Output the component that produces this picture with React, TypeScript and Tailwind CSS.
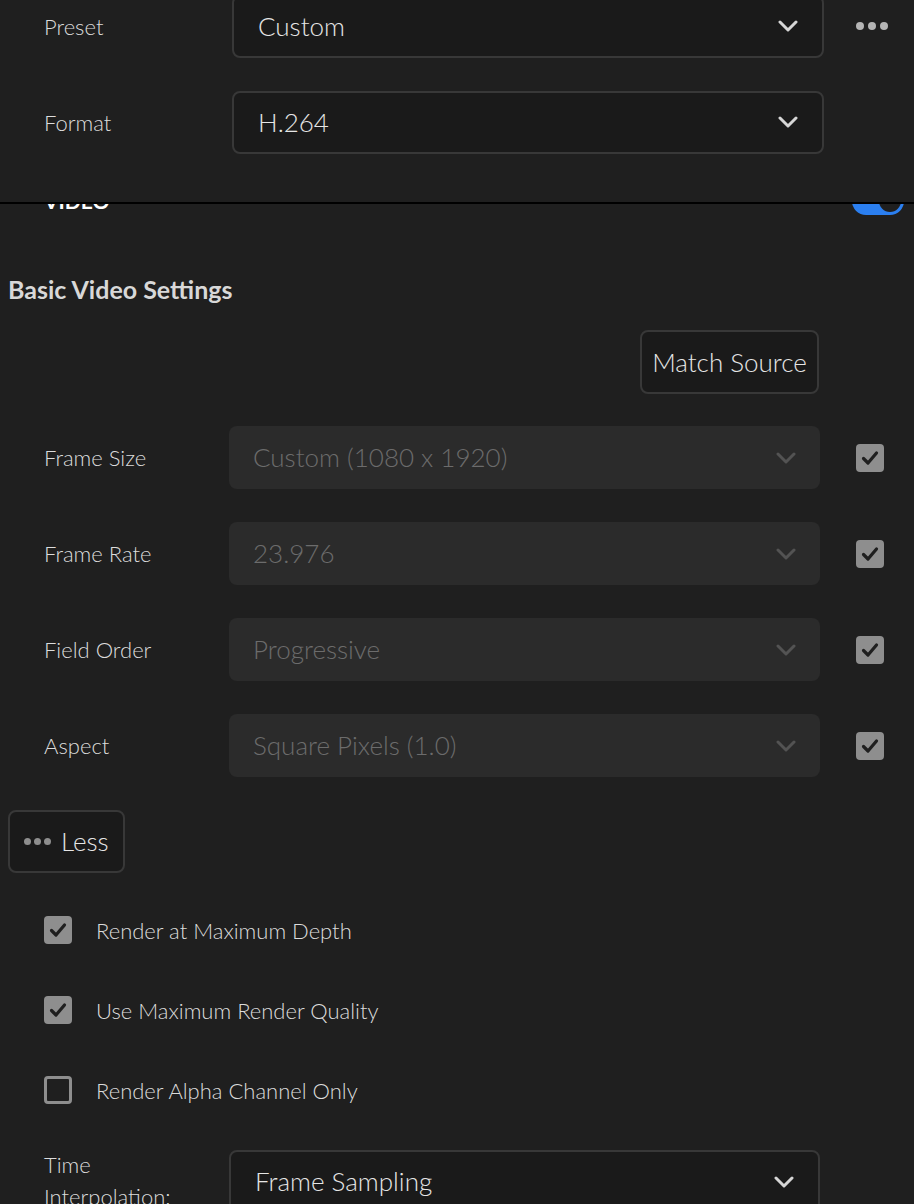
import React from "react";

const Chevron = ({ color }: { color: string }) => (
  <svg width="20" height="12" viewBox="0 0 20 12" fill="none">
    <path d="M2 2 L10 10 L18 2" stroke={color} strokeWidth="3" strokeLinecap="round" strokeLinejoin="round" />
  </svg>
);

const Check = ({ on }: { on: boolean }) =>
  on ? (
    <div className="w-[28px] h-[28px] rounded-[4px] bg-[#8e8e8e] flex items-center justify-center shrink-0">
      <svg width="18" height="16" viewBox="0 0 18 16" fill="none">
        <path d="M2.5 8.5 L7 13 L15.5 3" stroke="#1f1f1f" strokeWidth="3.2" strokeLinecap="round" strokeLinejoin="round" />
      </svg>
    </div>
  ) : (
    <div className="w-[28px] h-[28px] rounded-[4px] border-[3px] border-[#8e8e8e] shrink-0" />
  );

const DarkSelect = ({ value, className = "" }: { value: string; className?: string }) => (
  <div className={`h-[63px] rounded-[8px] border-2 border-[#383838] bg-[#1a1a1a] flex items-center justify-between pl-[24px] pr-[24px] ${className}`}>
    <span className="text-[26px] font-light text-[#e6e6e6]">{value}</span>
    <Chevron color="#d6d6d6" />
  </div>
);

const DisabledRow = ({ label, value }: { label: string; value: string }) => (
  <div className="flex items-center h-[63px]">
    <div className="w-[221px] pl-[36px] text-[22px] font-light text-[#dcdcdc]">{label}</div>
    <div className="w-[591px] h-[63px] rounded-[8px] bg-[#2b2b2b] flex items-center justify-between pl-[24px] pr-[24px]">
      <span className="text-[26px] font-light text-[#6c6c6c]">{value}</span>
      <Chevron color="#535353" />
    </div>
    <div className="ml-[36px]">
      <Check on={true} />
    </div>
  </div>
);

const CheckRow = ({ label, on }: { label: string; on: boolean }) => (
  <div className="flex items-center h-[28px] pl-[36px]">
    <Check on={on} />
    <span className="ml-[24px] text-[22px] font-light text-[#dcdcdc]">{label}</span>
  </div>
);

export default function App() {
  return (
    <div className="w-[914px] h-[1204px] overflow-hidden bg-[#1f1f1f] font-['Lato',sans-serif] flex flex-col">
      {/* sticky top panel */}
      <div className="relative z-10 h-[204px] shrink-0 bg-[#1f1f1f] border-b-2 border-black">
        <div className="flex items-center -mt-[5px] h-[62px]">
          <div className="w-[232px] pl-[44px] text-[22px] font-light text-[#dcdcdc]">Preset</div>
          <DarkSelect value="Custom" className="w-[592px] h-[62px]" />
          <div className="ml-[32px] flex gap-[4px]">
            <span className="w-[8px] h-[8px] rounded-full bg-[#b4b4b4]" />
            <span className="w-[8px] h-[8px] rounded-full bg-[#b4b4b4]" />
            <span className="w-[8px] h-[8px] rounded-full bg-[#b4b4b4]" />
          </div>
        </div>
        <div className="flex items-center mt-[34px] h-[62px]">
          <div className="w-[232px] pl-[44px] text-[22px] font-light text-[#dcdcdc]">Format</div>
          <DarkSelect value="H.264" className="w-[592px] h-[62px]" />
        </div>
      </div>

      {/* scrolled content */}
      <div className="flex flex-col px-[8px]">
        <div className="flex items-center justify-between h-[30px] -mt-[18px]">
          <div className="flex items-center">
            <span className="w-[10px] h-[3px] bg-[#cfcfcf] mr-[26px]" />
            <span className="text-[21px] font-bold text-white">VIDEO</span>
          </div>
          <div className="w-[52px] h-[28px] rounded-full bg-[#2b7ff0] flex items-center justify-end pr-[3px] mr-[2px]">
            <div className="w-[22px] h-[22px] rounded-full bg-[#1f1f1f]" />
          </div>
        </div>

        <div className="mt-[58px] text-[25px] font-bold text-[#d8d8d8] leading-[30px]">Basic Video Settings</div>

        <div className="flex justify-end mt-[26px] pr-[87px]">
          <div className="w-[179px] h-[64px] rounded-[8px] border-2 border-[#383838] bg-[#1a1a1a] flex items-center justify-center text-[26px] font-light text-[#e6e6e6]">
            Match Source
          </div>
        </div>

        <div className="flex flex-col gap-[33px] mt-[32px]">
          <DisabledRow label="Frame Size" value="Custom (1080 x 1920)" />
          <DisabledRow label="Frame Rate" value="23.976" />
          <DisabledRow label="Field Order" value="Progressive" />
          <DisabledRow label="Aspect" value="Square Pixels (1.0)" />
        </div>

        <div className="mt-[33px] w-[117px] h-[63px] rounded-[8px] border-2 border-[#383838] bg-[#1a1a1a] flex items-center pl-[14px]">
          <div className="flex gap-[3px]">
            <span className="w-[7px] h-[7px] rounded-full bg-[#8e8e8e]" />
            <span className="w-[7px] h-[7px] rounded-full bg-[#8e8e8e]" />
            <span className="w-[7px] h-[7px] rounded-full bg-[#8e8e8e]" />
          </div>
          <span className="ml-[10px] text-[26px] font-light text-[#e6e6e6]">Less</span>
        </div>

        <div className="flex flex-col gap-[52px] mt-[43px]">
          <CheckRow label="Render at Maximum Depth" on={true} />
          <CheckRow label="Use Maximum Render Quality" on={true} />
          <CheckRow label="Render Alpha Channel Only" on={false} />
        </div>

        <div className="flex mt-[46px]">
          <div className="w-[221px] pl-[36px] text-[22px] font-light leading-[32px] text-[#dcdcdc] -mt-[1px]">
            Time
            <br />
            Interpolation:
          </div>
          <DarkSelect value="Frame Sampling" className="w-[591px]" />
        </div>
      </div>
    </div>
  );
}
